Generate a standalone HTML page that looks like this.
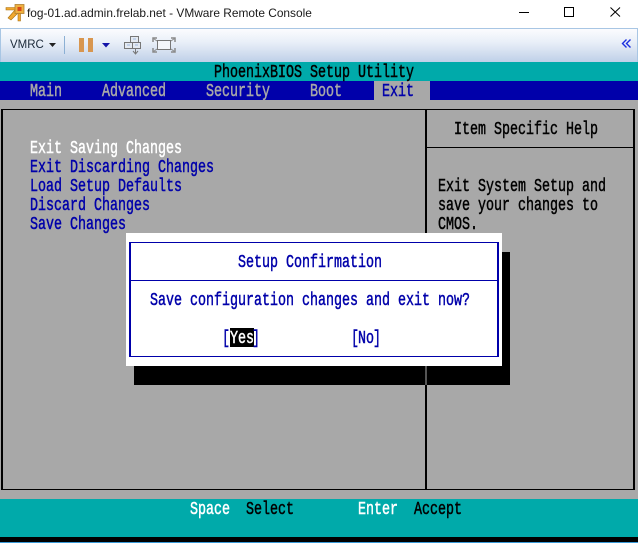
<!DOCTYPE html>
<html><head><meta charset="utf-8">
<style>
html,body{margin:0;padding:0;background:#fff}
#p{position:relative;width:638px;height:543px;overflow:hidden;background:#fff}
.b{position:absolute}
.t{position:absolute;margin-top:2px;font-family:"Liberation Mono",monospace;font-size:18px;line-height:19px;height:19px;white-space:pre;transform-origin:0 0;transform:scaleX(.7407);-webkit-text-stroke:.5px currentColor}
.u{position:absolute;font-family:"Liberation Sans",sans-serif;white-space:pre}
.bl{color:#0000aa}.gr{color:#a8a8a8}.wh{color:#fff}.k{color:#000}
</style></head><body><div id="p">
<!-- title bar -->
<svg class="b" style="left:5px;top:3px" width="20" height="20" viewBox="0 0 20 20">
<path d="M1 7H10L3 15L6 17L13 10V18H15.5V7L13 4.500H1Z" fill="#f0a830" stroke="#a87010" stroke-width=".6"/>
<rect x="10" y="1.500" width="9" height="9" fill="#f0b040" stroke="#b08030" stroke-width=".8"/>
<rect x="12.500" y="4" width="4" height="4" fill="#d84818"/>
</svg>
<div class="u" style="left:27px;top:5px;font-size:11.9px;line-height:16px;color:#1a1a1a">fog-01.ad.admin.frelab.net - VMware Remote Console</div>
<svg class="b" style="left:510px;top:0" width="128" height="28" viewBox="0 0 128 28">
<path d="M9 12.500H19" stroke="#000" stroke-width="1"/>
<rect x="54.500" y="7.500" width="9" height="9" fill="none" stroke="#000"/>
<path d="M100.500 7.500L110 16.500M110 7.500L100.500 16.500" stroke="#000" fill="none"/>
</svg>
<!-- toolbar -->
<div class="b" style="left:0;top:28px;width:636px;height:33px;border:1px solid #a8c6e4;background:linear-gradient(#fbfcfe,#e9eff8 40%,#bfd0e8)"></div>
<div class="u" style="left:10px;top:37px;font-size:11.5px;line-height:16px;color:#1c2a3a">VMRC</div>
<svg class="b" style="left:48px;top:36px" width="132" height="22" viewBox="0 0 132 22">
<path d="M1 7H8L4.500 11Z" fill="#222"/>
<rect x="16" y="0" width="1" height="18" fill="#8cb0d4"/>
<rect x="31" y="2" width="5" height="14" fill="#d8964f"/><rect x="40" y="2" width="5" height="14" fill="#d8964f"/>
<path d="M54 7H62L58 11.500Z" fill="#1414a8"/>
<g fill="#e4eaf2" stroke="#777" stroke-width="1">
<rect x="82.500" y="0.500" width="8" height="6"/><rect x="76.500" y="6.500" width="8" height="6"/><rect x="84.500" y="6.500" width="8" height="6"/>
</g>
<path d="M79 9H82M87 9H90M85 3H88" stroke="#9fb8de"/>
<path d="M87.500 13V17M85 15L87.500 18L90 15" stroke="#777" fill="none"/>
<rect x="109.500" y="4.500" width="13" height="9" fill="#f4f6fa" stroke="#777"/>
<path d="M105 6V2H109M127 6V2H123M105 12V16H109M127 12V16H123" fill="none" stroke="#8a8a8a" stroke-width="1.500"/>
<path d="M105.500 2.500L109 5M126.500 2.500L123 5M105.500 15.500L109 13M126.500 15.500L123 13" stroke="#8a8a8a"/>
</svg>
<svg class="b" style="left:621px;top:38px" width="12" height="12" viewBox="0 0 12 12">
<path d="M5.500 1.500L1.500 5.500L5.500 9.500M9.500 1.500L5.500 5.500L9.500 9.500" fill="none" stroke="#1a2ee0" stroke-width="1.400"/>
</svg>
<!-- BIOS -->
<div class="b" style="left:0;top:62px;width:638px;height:19px;background:#00aaaa"></div>
<div class="b" style="left:0;top:81px;width:638px;height:19px;background:#0000aa"></div>
<div class="b" style="left:0;top:100px;width:638px;height:399px;background:#a8a8a8"></div>
<div class="b" style="left:374px;top:81px;width:56px;height:19px;background:#a8a8a8"></div>
<div class="t k" style="left:214px;top:62px">PhoenixBIOS Setup Utility</div>
<div class="t gr" style="left:30px;top:81px">Main</div>
<div class="t gr" style="left:102px;top:81px">Advanced</div>
<div class="t gr" style="left:206px;top:81px">Security</div>
<div class="t gr" style="left:310px;top:81px">Boot</div>
<div class="t bl" style="left:382px;top:81px">Exit</div>
<!-- frames -->
<div class="b" style="left:1px;top:109px;width:630px;height:379px;border:1px solid #000;border-width:1px 2px 1px 2px"></div>
<div class="b" style="left:425px;top:109px;width:2px;height:380px;background:#000"></div>
<div class="b" style="left:427px;top:147px;width:206px;height:1px;background:#000"></div>
<div class="t wh" style="left:30px;top:138px">Exit Saving Changes</div>
<div class="t bl" style="left:30px;top:157px">Exit Discarding Changes</div>
<div class="t bl" style="left:30px;top:176px">Load Setup Defaults</div>
<div class="t bl" style="left:30px;top:195px">Discard Changes</div>
<div class="t bl" style="left:30px;top:214px">Save Changes</div>
<div class="t k" style="left:454px;top:119px">Item Specific Help</div>
<div class="t k" style="left:438px;top:176px">Exit System Setup and</div>
<div class="t k" style="left:438px;top:195px">save your changes to</div>
<div class="t k" style="left:438px;top:214px">CMOS.</div>
<!-- dialog -->
<div class="b" style="left:134px;top:252px;width:376px;height:133px;background:#000"></div>
<div class="b" style="left:425px;top:366px;width:2px;height:19px;background:#555"></div>
<div class="b" style="left:126px;top:233px;width:376px;height:133px;background:#fff"></div>
<div class="b" style="left:129px;top:242px;width:366px;height:113px;border:1px solid #0000aa;border-width:1px 2px"></div>
<div class="b" style="left:131px;top:280px;width:366px;height:1px;background:#0000aa"></div>
<div class="t bl" style="left:238px;top:252px">Setup Confirmation</div>
<div class="t bl" style="left:150px;top:290px">Save configuration changes and exit now?</div>
<div class="b" style="left:230px;top:328px;width:24px;height:19px;background:#000"></div>
<div class="t bl" style="left:222px;top:328px">[</div>
<div class="t wh" style="left:230px;top:328px">Yes</div>
<div class="t bl" style="left:252px;top:328px">]</div>
<div class="t bl" style="left:351px;top:328px">[</div>
<div class="t bl" style="left:358px;top:328px">No</div>
<div class="t bl" style="left:373px;top:328px">]</div>
<!-- footer -->
<div class="b" style="left:0;top:499px;width:638px;height:38px;background:#00aaaa"></div>
<div class="b" style="left:0;top:537px;width:638px;height:5px;background:#000"></div>
<div class="b" style="left:0;top:542px;width:638px;height:1px;background:#3a9ad8"></div>
<div class="t wh" style="left:190px;top:499px">Space</div>
<div class="t k" style="left:246px;top:499px">Select</div>
<div class="t wh" style="left:358px;top:499px">Enter</div>
<div class="t k" style="left:414px;top:499px">Accept</div>
</div></body></html>
